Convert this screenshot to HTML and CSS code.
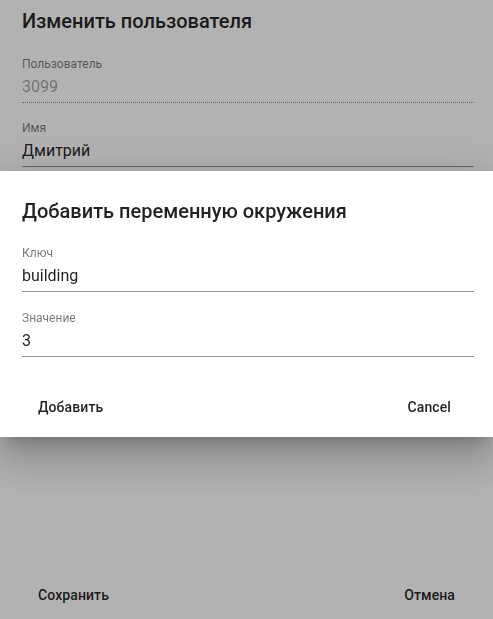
FILE: index.html
```html
<!DOCTYPE html>
<html lang="ru">
<head>
    <meta charset="UTF-8">
    <meta name="viewport" content="width=device-width, initial-scale=1.0">
    <title>Изменить пользователя</title>
    <link rel="stylesheet" href="styles.css">
</head>
<body>
    <div class="dialog dialog-full">
        <h2 class="dialog-title dialog-title-top">Изменить пользователя</h2>
        <div class="dialog-content">
            <div class="field">
                <label class="field-label">Пользователь</label>
                <div class="field-input disabled">3099</div>
            </div>
            <div class="field">
                <label class="field-label">Имя</label>
                <div class="field-input">Дмитрий</div>
            </div>
        </div>
        <div class="dialog-actions dialog-actions-bottom">
            <button class="btn">Сохранить</button>
            <button class="btn">Отмена</button>
        </div>
    </div>

    <!-- second dialog over the first one -->
    <div class="backdrop">
        <div class="dialog dialog-modal">
            <h2 class="dialog-title">Добавить переменную окружения</h2>
            <div class="dialog-content dialog-content-modal">
                <div class="field">
                    <label class="field-label">Ключ</label>
                    <div class="field-input">building</div>
                </div>
                <div class="field">
                    <label class="field-label">Значение</label>
                    <div class="field-input">3</div>
                </div>
            </div>
            <div class="dialog-actions dialog-actions-modal">
                <button class="btn">Добавить</button>
                <button class="btn btn-cancel">Cancel</button>
            </div>
        </div>
    </div>
</body>
</html>
```

FILE: styles.css
```css
* {
    box-sizing: border-box;
}
body {
    margin: 0;
    padding: 0;
    font-family: Roboto, "Noto Sans", Arial, sans-serif;
    color: rgba(0, 0, 0, 0.87);
    background: #ffffff;
    overflow: hidden;
}
.dialog {
    background: #ffffff;
    display: flex;
    flex-direction: column;
}
.dialog-full {
    height: 100vh;
}
.dialog-title {
    margin: 0;
    padding: 24px 22px 20px;
    font-size: 20px;
    font-weight: 500;
    line-height: 32px;
}
.dialog-title-top {
    padding-top: 5px;
    padding-bottom: 21px;
}
.dialog-content {
    display: flex;
    flex-direction: column;
    gap: 19px;
    padding: 0 19px 0 22px;
}
.dialog-content-modal {
    gap: 20px;
    padding-bottom: 24px;
}
.field {
    display: flex;
    flex-direction: column;
}
.field-label {
    font-size: 12px;
    line-height: 12px;
    color: rgba(0, 0, 0, 0.54);
    margin-bottom: 2px;
}
.field-input {
    font-size: 16px;
    line-height: 19px;
    padding: 5px 0 6px;
    border-bottom: 1px solid rgba(0, 0, 0, 0.42);
}
.field-input.disabled {
    color: rgba(0, 0, 0, 0.38);
    border-bottom: 1px dotted rgba(0, 0, 0, 0.42);
}
.dialog-actions {
    display: flex;
    justify-content: space-between;
    padding: 8px 22px;
}
.dialog-actions-bottom {
    margin-top: auto;
    padding-bottom: 6px;
}
.dialog-actions-modal {
    padding-bottom: 12px;
}
.btn {
    font-family: inherit;
    font-size: 14px;
    font-weight: 500;
    line-height: 24px;
    letter-spacing: 0.1px;
    color: rgba(0, 0, 0, 0.87);
    background: none;
    border: none;
    padding: 6px 16px;
    cursor: pointer;
}
.btn-cancel {
    margin-right: 4px;
}
.backdrop {
    position: fixed;
    top: 0;
    left: 0;
    right: 0;
    bottom: 0;
    background: rgba(0, 0, 0, 0.3);
    display: flex;
    flex-direction: column;
    justify-content: center;
    padding-bottom: 12px;
}
.dialog-modal {
    width: 100%;
    box-shadow: 0px 11px 15px -7px rgba(0, 0, 0, 0.2),
        0px 24px 38px 3px rgba(0, 0, 0, 0.14),
        0px 9px 46px 8px rgba(0, 0, 0, 0.12);
}
```
